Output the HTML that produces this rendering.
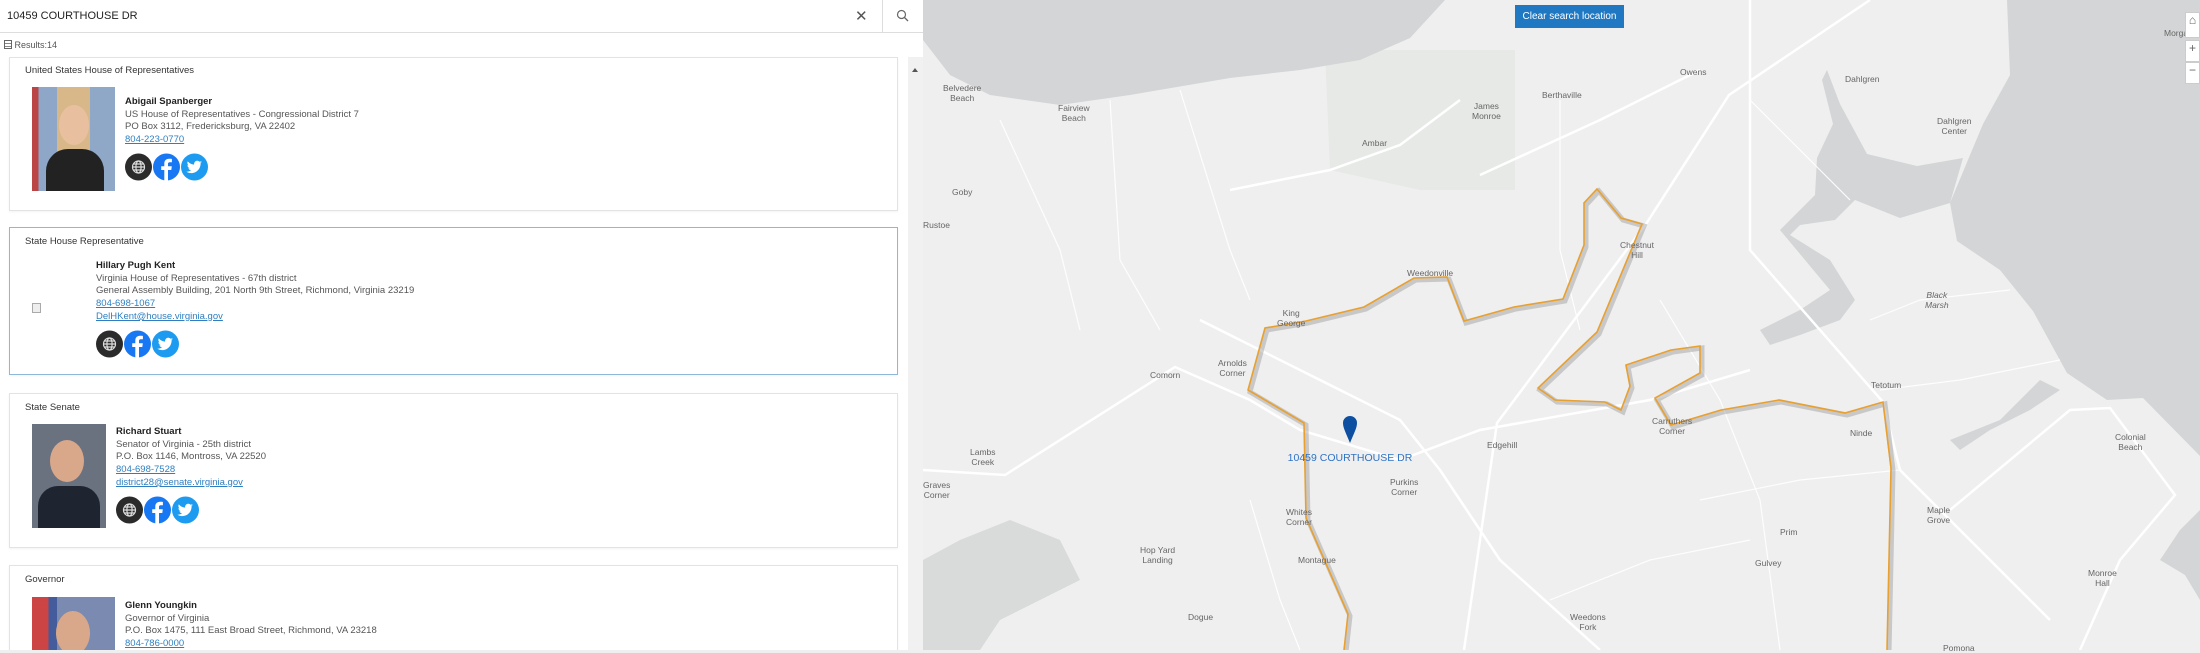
<!DOCTYPE html>
<html><head><meta charset="utf-8"><style>
*{box-sizing:border-box;margin:0;padding:0}
body{width:2200px;height:650px;overflow:hidden;background:#efefef;font-family:"Liberation Sans",sans-serif;position:relative}
#panel{position:absolute;left:0;top:0;width:923px;height:650px;background:#fff;overflow:hidden}
#search{position:absolute;left:0;top:0;width:923px;height:33px;border-bottom:1px solid #ddd;background:#fff}
#search .q{position:absolute;left:7px;top:10px;font-size:11px;color:#222}
#search .x{position:absolute;left:855px;top:7px;font-size:15px;color:#555}
#search .sep{position:absolute;left:882px;top:0;width:1px;height:33px;background:#ddd}
#res{position:absolute;left:4px;top:40px;font-size:9px;color:#555}
#sb{position:absolute;left:908px;top:57px;width:15px;height:593px;background:#f1f1f1}
#sb:after{content:"";position:absolute;left:4px;top:8px;border:3px solid transparent;border-bottom:4px solid #555}
.card{position:absolute;left:9px;width:889px;border:1px solid #e3e3e3;background:#fff;box-shadow:0 1px 2px rgba(0,0,0,.05)}
.card.sel{border-color:#8fb8d8}
.t{position:absolute;left:15px;font-size:9.5px;color:#333}
.ph{position:absolute;left:22px;width:83px;height:104px;overflow:hidden}
.info{position:absolute;font-size:9.5px;color:#555;line-height:12.7px;white-space:nowrap}
.info b{color:#222;font-weight:bold}
.info a{color:#2f7fc0;text-decoration:underline;display:block}
.ic{display:flex;gap:1px;margin-top:6px}
.ic svg{display:block}
#btn{position:absolute;left:1515px;top:5px;width:109px;height:23px;background:#1f78c1;color:#fff;font-size:10px;line-height:23px;text-align:center}
.ctl{position:absolute;left:2185px;width:15px;background:#fff;border:1px solid #ccc;color:#666;font-size:12px;text-align:center}
.lbl{position:absolute;font-size:8.5px;color:#666;text-align:center;line-height:10px}
</style></head><body>
<svg width="0" height="0" style="position:absolute"><defs>
<symbol id="gl" viewBox="0 0 27 28"><circle cx="13.5" cy="14" r="13.5" fill="#2b2b2b"/><g stroke="#ddd" stroke-width="1.2" fill="none"><circle cx="13.5" cy="14" r="6"/><ellipse cx="13.5" cy="14" rx="2.6" ry="6"/><path d="M7.5,14 H19.5 M8.5,11 H18.5 M8.5,17 H18.5"/></g></symbol>
<symbol id="fb" viewBox="0 0 27 28"><circle cx="13.5" cy="14" r="13.5" fill="#1877f2"/><path d="M15,28 V17 H18.3 L18.8,13.3 H15 V11 C15,9.9 15.4,9.2 17,9.2 H18.9 V5.9 C18.5,5.8 17.3,5.7 16,5.7 C13.2,5.7 11.3,7.4 11.3,10.5 V13.3 H8.2 V17 H11.3 V28 Z" fill="#fff"/></symbol>
<symbol id="tw" viewBox="0 0 27 28"><circle cx="13.5" cy="14" r="13.5" fill="#1d9bf0"/><path d="M21,9.2 C20.4,9.5 19.8,9.6 19.2,9.7 C19.8,9.3 20.3,8.7 20.5,8 C19.9,8.4 19.2,8.6 18.5,8.8 C17.3,7.5 15.2,7.5 14,8.7 C13.2,9.5 12.9,10.6 13.1,11.6 C10.6,11.5 8.3,10.3 6.8,8.4 C6,9.8 6.4,11.6 7.7,12.5 C7.2,12.5 6.8,12.3 6.4,12.1 C6.4,13.6 7.4,14.8 8.8,15.1 C8.4,15.2 7.9,15.3 7.4,15.2 C7.8,16.4 8.9,17.3 10.2,17.3 C9,18.2 7.5,18.7 6,18.7 C5.7,18.7 5.5,18.7 5.2,18.6 C6.7,19.6 8.4,20.1 10.2,20.1 C16.3,20.1 19.6,15 19.6,10.6 V10.2 C20.2,9.8 20.7,9.3 21,8.7 Z" fill="#fff"/></symbol>
</defs></svg>
<svg width="2200" height="650" style="position:absolute;left:0;top:0">
<rect x="923" y="0" width="1277" height="650" fill="#efefef"/>
<path d="M1325,50 L1515,50 L1515,190 L1420,190 L1330,170 Z" fill="#e6e9e6"/>
<path d="M923,0 L1445,0 L1410,38 L1360,60 L1300,70 L1230,78 L1130,95 L1060,105 L990,95 L950,75 L923,40 Z" fill="#d3d5d6"/>
<path d="M2007,0 L2010,75 L1983,124 L1950,203 L1957,241 L2000,270 L2033,311 L2067,373 L2107,400 L2143,398 L2200,456 L2200,0 L2170,0 L2160,40 L2200,35 L2200,0 Z" fill="#d3d5d6"/>
<path d="M1827,70 L1840,104 L1867,154 L1917,166 L1963,158 L1950,203 L1900,218 L1855,200 L1835,220 L1800,225 L1790,235 L1830,260 L1855,300 L1840,320 L1800,335 L1770,345 L1760,330 L1800,310 L1830,290 L1805,260 L1780,230 L1815,195 L1817,158 L1833,124 L1822,80 Z" fill="#d3d5d6"/>
<path d="M1950,440 L2000,420 L2040,380 L2060,390 L2030,410 L1990,430 L1960,450 Z" fill="#d3d5d6"/>
<path d="M2200,510 L2180,530 L2160,560 L2185,575 L2200,600 Z" fill="#d3d5d6"/>
<path d="M923,650 L923,560 L960,540 L1010,520 L1060,540 L1080,580 L1040,600 L1000,620 L980,650 Z" fill="#d9dbdb"/>
<g stroke="#fff" stroke-width="2.5" fill="none">
<path d="M1464,650 L1497,423 L1646,224 L1729,95 L1870,0"/>
<path d="M923,470 L1005,475 L1175,367 L1250,400 L1300,430 L1400,460 L1480,430 L1650,400 L1750,370"/>
<path d="M1200,320 L1400,420 L1440,470 L1500,560 L1600,650"/>
<path d="M1480,175 L1600,120 L1700,70"/>
<path d="M1230,190 L1330,170 L1400,145 L1460,100"/>
<path d="M1750,0 L1750,250 L1883,402 L1900,470 L1990,560 L2050,620"/>
<path d="M1950,510 L2070,410 L2110,408 L2175,495 L2120,560 L2080,650"/>
</g>
<g stroke="#fff" stroke-width="1.2" fill="none" opacity=".9">
<path d="M1000,120 L1060,250 L1080,330"/><path d="M1110,100 L1120,260 L1160,330"/><path d="M1180,90 L1230,250 L1250,300"/>
<path d="M1560,100 L1560,250 L1580,330"/><path d="M1660,300 L1720,400 L1760,500 L1780,650"/><path d="M1750,100 L1800,150 L1850,200"/>
<path d="M1700,500 L1800,480 L1900,470"/><path d="M1250,500 L1280,600 L1300,650"/><path d="M1550,600 L1650,560 L1750,540"/>
<path d="M1880,390 L1960,380 L2060,360"/><path d="M1870,320 L1920,300 L2010,290"/>
</g>
<path d="M1344,650 L1348,614 L1306,518 L1304,423 L1248,390 L1265,328 L1306,321 L1364,307 L1414,278 L1447,277 L1464,321 L1514,307 L1563,299 L1584,245 L1584,203 L1597,189 L1621,218 L1642,224 L1597,332 L1538,388 L1555,400 L1605,402 L1621,410 L1630,386 L1626,365 L1671,350 L1700,346 L1700,373 L1655,398 L1671,425 L1721,410 L1779,400 L1845,413 L1883,402 L1891,468 L1887,650" fill="none" stroke="#999" stroke-width="5" opacity=".45" transform="translate(2,2)"/>
<path d="M1344,650 L1348,614 L1306,518 L1304,423 L1248,390 L1265,328 L1306,321 L1364,307 L1414,278 L1447,277 L1464,321 L1514,307 L1563,299 L1584,245 L1584,203 L1597,189 L1621,218 L1642,224 L1597,332 L1538,388 L1555,400 L1605,402 L1621,410 L1630,386 L1626,365 L1671,350 L1700,346 L1700,373 L1655,398 L1671,425 L1721,410 L1779,400 L1845,413 L1883,402 L1891,468 L1887,650" fill="none" stroke="#e8a030" stroke-width="1.6"/>
<path d="M1350,443 C1346,433 1343,428 1343,423 A7,7 0 0 1 1357,423 C1357,428 1354,433 1350,443 Z" fill="#0d4fa0"/>
</svg>
<div class="lbl" style="top:453px;font-size:10.5px;color:#2f73c4;width:150px;margin-left:-75px;left:1350px">10459 COURTHOUSE DR</div>
<div class="lbl" style="left:943px;top:83px">Belvedere<br>Beach</div>
<div class="lbl" style="left:1058px;top:103px">Fairview<br>Beach</div>
<div class="lbl" style="left:1362px;top:138px">Ambar</div>
<div class="lbl" style="left:1472px;top:101px">James<br>Monroe</div>
<div class="lbl" style="left:1542px;top:90px">Berthaville</div>
<div class="lbl" style="left:1680px;top:67px">Owens</div>
<div class="lbl" style="left:1845px;top:74px">Dahlgren</div>
<div class="lbl" style="left:1937px;top:116px">Dahlgren<br>Center</div>
<div class="lbl" style="left:2164px;top:28px">Morga</div>
<div class="lbl" style="left:952px;top:187px">Goby</div>
<div class="lbl" style="left:923px;top:220px">Rustoe</div>
<div class="lbl" style="left:1407px;top:268px">Weedonville</div>
<div class="lbl" style="left:1277px;top:308px">King<br>George</div>
<div class="lbl" style="left:1620px;top:240px">Chestnut<br>Hill</div>
<div class="lbl" style="left:1218px;top:358px">Arnolds<br>Corner</div>
<div class="lbl" style="left:1150px;top:370px">Comorn</div>
<div class="lbl" style="left:1487px;top:440px">Edgehill</div>
<div class="lbl" style="left:1652px;top:416px">Carruthers<br>Corner</div>
<div class="lbl" style="left:1871px;top:380px">Tetotum</div>
<div class="lbl" style="left:1850px;top:428px">Ninde</div>
<div class="lbl" style="left:1925px;top:290px;font-style:italic">Black<br>Marsh</div>
<div class="lbl" style="left:2115px;top:432px">Colonial<br>Beach</div>
<div class="lbl" style="left:970px;top:447px">Lambs<br>Creek</div>
<div class="lbl" style="left:923px;top:480px">Graves<br>Corner</div>
<div class="lbl" style="left:1390px;top:477px">Purkins<br>Corner</div>
<div class="lbl" style="left:1286px;top:507px">Whites<br>Corner</div>
<div class="lbl" style="left:1140px;top:545px">Hop Yard<br>Landing</div>
<div class="lbl" style="left:1298px;top:555px">Montague</div>
<div class="lbl" style="left:1780px;top:527px">Prim</div>
<div class="lbl" style="left:1755px;top:558px">Gulvey</div>
<div class="lbl" style="left:1927px;top:505px">Maple<br>Grove</div>
<div class="lbl" style="left:2088px;top:568px">Monroe<br>Hall</div>
<div class="lbl" style="left:1188px;top:612px">Dogue</div>
<div class="lbl" style="left:1570px;top:612px">Weedons<br>Fork</div>
<div class="lbl" style="left:1943px;top:643px">Pomona</div>
<div id="btn">Clear search location</div>
<div class="ctl" style="top:12px;height:26px">⌂</div>
<div class="ctl" style="top:40px;height:22px">+</div>
<div class="ctl" style="top:62px;height:22px">−</div>

<div id="panel">
<div id="search"><span class="q">10459 COURTHOUSE DR</span><span class="x">✕</span><div class="sep"></div>
<svg style="position:absolute;left:896px;top:9px" width="14" height="14"><circle cx="5.5" cy="5.5" r="4" stroke="#666" fill="none" stroke-width="1.2"/><path d="M8.5,8.5 L12,12" stroke="#666" stroke-width="1.3"/></svg></div>
<div id="res"><span style="display:inline-block;width:8px;height:9px;border:1px solid #666;vertical-align:-1px;background:repeating-linear-gradient(#fff 0 2px,#888 2px 3px)"></span> Results:14</div>
<div id="sb"></div>

<div class="card" style="top:57px;height:154px">
<div class="t" style="top:7px">United States House of Representatives</div>
<div class="ph" style="top:29px;background:linear-gradient(90deg,#b44 0 8%,#8ea6c8 8% 30%,#d8b888 30% 70%,#8fa8c8 70%);"><div style="position:absolute;left:14px;top:62px;width:58px;height:44px;background:#222;border-radius:22px 22px 0 0"></div><div style="position:absolute;left:27px;top:18px;width:30px;height:40px;background:#e8c0a0;border-radius:50%"></div></div>
<div class="info" style="left:115px;top:38px"><b>Abigail Spanberger</b><br>US House of Representatives - Congressional District 7<br>PO Box 3112, Fredericksburg, VA 22402<a>804-223-0770</a><div class="ic"><svg width="27" height="28"><use href="#gl"/></svg><svg width="27" height="28"><use href="#fb"/></svg><svg width="27" height="28"><use href="#tw"/></svg></div></div>
</div>

<div class="card sel" style="top:227px;height:148px">
<div class="t" style="top:8px">State House Representative</div>
<div style="position:absolute;left:22px;top:75px;width:9px;height:10px;border:1px solid #aaa;background:#eee"></div>
<div class="info" style="left:86px;top:32px"><b>Hillary Pugh Kent</b><br>Virginia House of Representatives - 67th district<br>General Assembly Building, 201 North 9th Street, Richmond, Virginia 23219<a>804-698-1067</a><a>DelHKent@house.virginia.gov</a><div class="ic"><svg width="27" height="28"><use href="#gl"/></svg><svg width="27" height="28"><use href="#fb"/></svg><svg width="27" height="28"><use href="#tw"/></svg></div></div>
</div>

<div class="card" style="top:393px;height:155px">
<div class="t" style="top:8px">State Senate</div>
<div class="ph" style="top:30px;width:74px;background:#6a7280"><div style="position:absolute;left:6px;top:62px;width:62px;height:44px;background:#1e2430;border-radius:20px 20px 0 0"></div><div style="position:absolute;left:18px;top:16px;width:34px;height:42px;background:#d9a88a;border-radius:50%"></div></div>
<div class="info" style="left:106px;top:32px"><b>Richard Stuart</b><br>Senator of Virginia - 25th district<br>P.O. Box 1146, Montross, VA 22520<a>804-698-7528</a><a>district28@senate.virginia.gov</a><div class="ic"><svg width="27" height="28"><use href="#gl"/></svg><svg width="27" height="28"><use href="#fb"/></svg><svg width="27" height="28"><use href="#tw"/></svg></div></div>
</div>

<div class="card" style="top:565px;height:85px;border-bottom:none">
<div class="t" style="top:8px">Governor</div>
<div class="ph" style="top:31px;height:54px;background:linear-gradient(90deg,#c44 0 20%,#445c9c 20% 30%,#7a8ab0 30%)"><div style="position:absolute;left:24px;top:14px;width:34px;height:44px;background:#d9a88a;border-radius:50%"></div></div>
<div class="info" style="left:115px;top:34px"><b>Glenn Youngkin</b><br>Governor of Virginia<br>P.O. Box 1475, 111 East Broad Street, Richmond, VA 23218<a>804-786-0000</a></div>
</div>
</div>
</body></html>
